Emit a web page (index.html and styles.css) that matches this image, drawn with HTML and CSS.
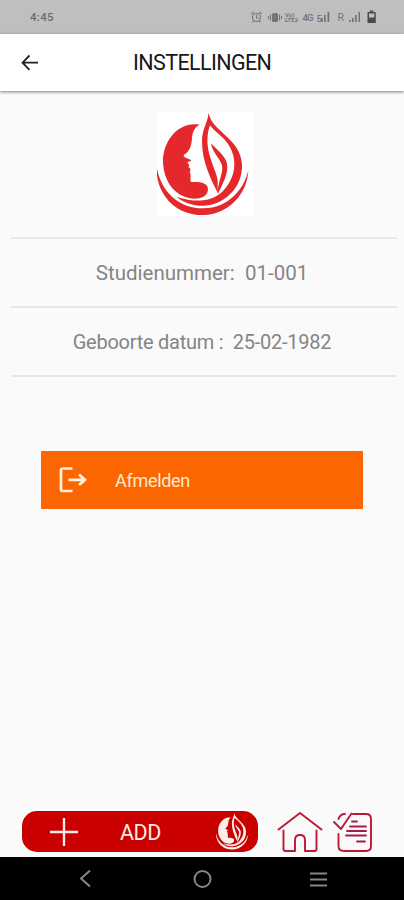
FILE: index.html
```html
<!DOCTYPE html>
<html lang="nl">
<head>
<meta charset="utf-8">
<title>Instellingen</title>
<link rel="stylesheet" href="styles.css">
</head>
<body>
<svg class="defs" width="0" height="0" aria-hidden="true">
  <symbol id="emblem" viewBox="36 36 288 312">
    <path d="M164 74C100 64 52 122 54 190C57 240 83 278 119 290C146 301 181 297 188 275C194 250 173 244 138 246C134 238 140 224 134 215C139 210 137 205 130 202C136 197 130 192 127 187L139 182C132 174 114 174 116 165C132 158 141 136 141 112C143 92 152 79 164 74Z"/>
    <path fill-rule="evenodd" d="M191 38C199 94 287 114 291 193C294 270 227 323 162 317C134 314 112 305 96 291C152 309 200 305 231 276C286 221 275 150 230 110C214 96 202 86 195 76C180 116 190 158 199 182C207 208 221 232 218 254C218 269 219 276 220 282C198 238 172 189 171 126C170 88 187 72 191 38Z"/>
    <path fill-rule="evenodd" d="M198 130C218 153 248 171 247 202C246 231 231 255 219 282C215 252 236 222 231 196C222 171 202 157 198 130Z"/>
    <path d="M35 200C45 268 98 327 176 325C247 325 296 271 310 211C307 284 248 344 176 345C92 348 31 281 35 200Z"/>
  </symbol>
</svg>
<div class="screen">
  <div class="status">
    <span class="clock">4:45</span>
    <svg class="status-icons" width="140" height="25" viewBox="0 0 140 25">
      <g fill="none" stroke="#747474" stroke-width="1.1">
        <circle cx="11.5" cy="12.5" r="4"/><path d="M11.5 10v3h2M6.5 9l2.3-2.2M16.500 9l-2.300-2.200M8.500 16l-1 1.500M14.500 16l1 1.500"/>
        <path d="M23.500 11v3M25.500 9.500v6M34.500 9.500v6M36.500 11v3"/>
      </g>
      <g fill="#747474">
        <rect x="27" y="8" width="6" height="9" rx="1.500"/>
        <text x="40" y="11.500" class="tiny">Vo)</text><text x="40" y="17" class="tiny">LTE2</text>
        <text x="57.500" y="16" class="net" textLength="11">4G</text>
        <text x="71.500" y="17" class="net" textLength="5">5</text>
        <path d="M76 13h1.700v4H76zM79 10h1.700v7H79zM82.500 7h1.800v10h-1.800z"/>
        <text x="92.500" y="16" class="roam">R</text>
        <path d="M104 15h1.700v2H104zM107 13h1.700v4H107zM110 10h1.700v7H110zM113.500 7h1.500v10h-1.500z"/>
      </g>
      <path fill="#4c4c4c" fill-rule="evenodd" d="M124.800 5.500h3.500V7h1.700q.8 0 .8.800v10.200H122.500V7.800q0-.8.800-.8h1.500zM124 8.500v4h5.300v-4z"/>
    </svg>
  </div>
  <header class="header">
    <svg class="back" width="20" height="20" viewBox="0 0 20 20"><path d="M18 9.700H3M9.500 2.500L2.500 9.700L9.500 16.900"/></svg>
    <h1>INSTELLINGEN</h1>
  </header>
  <main class="content">
    <div class="logo"><svg width="96" height="104"><use href="#emblem"/></svg></div>
    <div class="info">
      <div class="row"><span class="study">Studienummer:&nbsp; 01-001</span></div>
      <div class="row"><span class="birth">Geboorte datum :&nbsp; 25-02-1982</span></div>
    </div>
    <div class="logout">
      <svg width="28" height="26" viewBox="0 0 28 26"><path d="M13.500 1.500H4Q2 1.500 2 3.500V22Q2 24 4 24H13.500M9.500 12.800H26M20 7.500L26 12.800L20 18.100"/></svg>
      <span>Afmelden</span>
    </div>
  </main>
  <nav class="actions">
    <div class="add">
      <svg class="plus" width="28" height="28" viewBox="0 0 28 28"><path d="M14 0V28M0 14H28"/></svg>
      <span>ADD</span>
      <svg class="mark" width="34" height="37"><use href="#emblem"/></svg>
    </div>
    <svg class="home" width="46" height="42" viewBox="0 0 46 42"><path d="M1.500 18.500L23 2L44.500 18.500M6.500 19.500V38Q6.500 40 8.500 40H18V29Q18 24 23 24T28 29V40H37.500Q39.500 40 39.500 38V19.500"/></svg>
    <svg class="list" width="40" height="42" viewBox="0 0 40 42"><path d="M5.500 8Q7 3 12 3M20 3H33Q38 3 38 8V35Q38 40 33 40H11Q5.500 40 5.500 35V23M1 11L8 18L18.500 2.500"/><path class="dark" d="M19 10.500H24M17 15.500H33M14 20H33M13 24.500H33M24 30.500H32"/></svg>
  </nav>
  <div class="system">
    <svg width="404" height="43" viewBox="0 0 404 43"><path d="M90 13.500L81 21.500L90 29.500"/><circle cx="202.500" cy="22" r="8"/><path d="M310 16.500H327M310 22.500H327M310 28.500H327"/></svg>
  </div>
</div>
</body>
</html>
```
FILE: styles.css
```css
* { box-sizing: border-box; }
body { margin: 0; font-family: Roboto, sans-serif; background: #fafafa; }
svg { display: block; flex: none; }
.defs { position: absolute; }
.screen { width: 404px; height: 900px; display: flex; flex-direction: column; background: #fafafa; overflow: hidden; }
.status { height: 34px; flex: none; background: #bfbfbf; display: flex; justify-content: space-between; padding: 5px 19px 0 30px; }
.clock { font-size: 11.5px; line-height: 25px; letter-spacing: .3px; color: #6b6b6b; font-weight: 500; }
.tiny { font-size: 6px; font-weight: 700; }
.net { font-size: 9.5px; font-weight: 500; }
.roam { font-size: 10.5px; }
.header { height: 57px; flex: none; background: #fff; display: flex; align-items: center; padding-left: 20px; box-shadow: 0 1px 3px rgba(0,0,0,.5); }
.back { fill: none; stroke: #222; stroke-width: 1.8; }
h1 { margin: 0 0 0 93px; padding-top: 1px; font-size: 21.5px; letter-spacing: -.6px; line-height: 30px; font-weight: 400; color: #161616; white-space: nowrap; }
.content { flex: 1; padding: 21px 7px 0 11px; }
.logo { width: 96px; height: 104px; margin-left: 146px; background: #fff; fill: #e4282b; }
.info { margin-top: 21px; border-top: 2px solid #e7e7e7; }
.row { height: 69px; border-bottom: 2px solid #e7e7e7; display: flex; justify-content: center; align-items: center; padding: 1px 4px 0 0; color: #858585; white-space: nowrap; }
.study { font-size: 20.5px; }
.birth { font-size: 20px; letter-spacing: -.25px; }
.logout { width: 322px; height: 58px; margin: 74px 0 0 30px; background: #fb6600; display: flex; align-items: center; padding-left: 18px; gap: 28px; color: #ffe9cf; font-size: 18px; letter-spacing: -.3px; }
.logout svg { fill: none; stroke: #fff0df; stroke-width: 2.7; }
.actions { height: 46px; flex: none; padding-left: 22px; display: flex; align-items: flex-start; }
.add { width: 236px; height: 41px; background: #ca0000; border-radius: 15px; display: flex; align-items: center; padding-left: 28px; color: #ffeadf; font-size: 21.5px; letter-spacing: -.5px; }
.add span { padding-top: 2px; }
.plus { fill: none; stroke: #ffeee8; stroke-width: 2.3; margin-right: 42px; }
.mark { fill: #ffeee8; margin-left: auto; margin-right: 8px; }
.home, .list { fill: none; stroke: #be1835; stroke-width: 1.9; stroke-linecap: round; stroke-linejoin: round; }
.home { margin-left: 19px; }
.list { margin-left: 10px; }
.dark { stroke: #a51e45; }
.system { height: 43px; flex: none; background: #000; }
.system svg { fill: none; stroke: #858585; stroke-width: 2; }
```
